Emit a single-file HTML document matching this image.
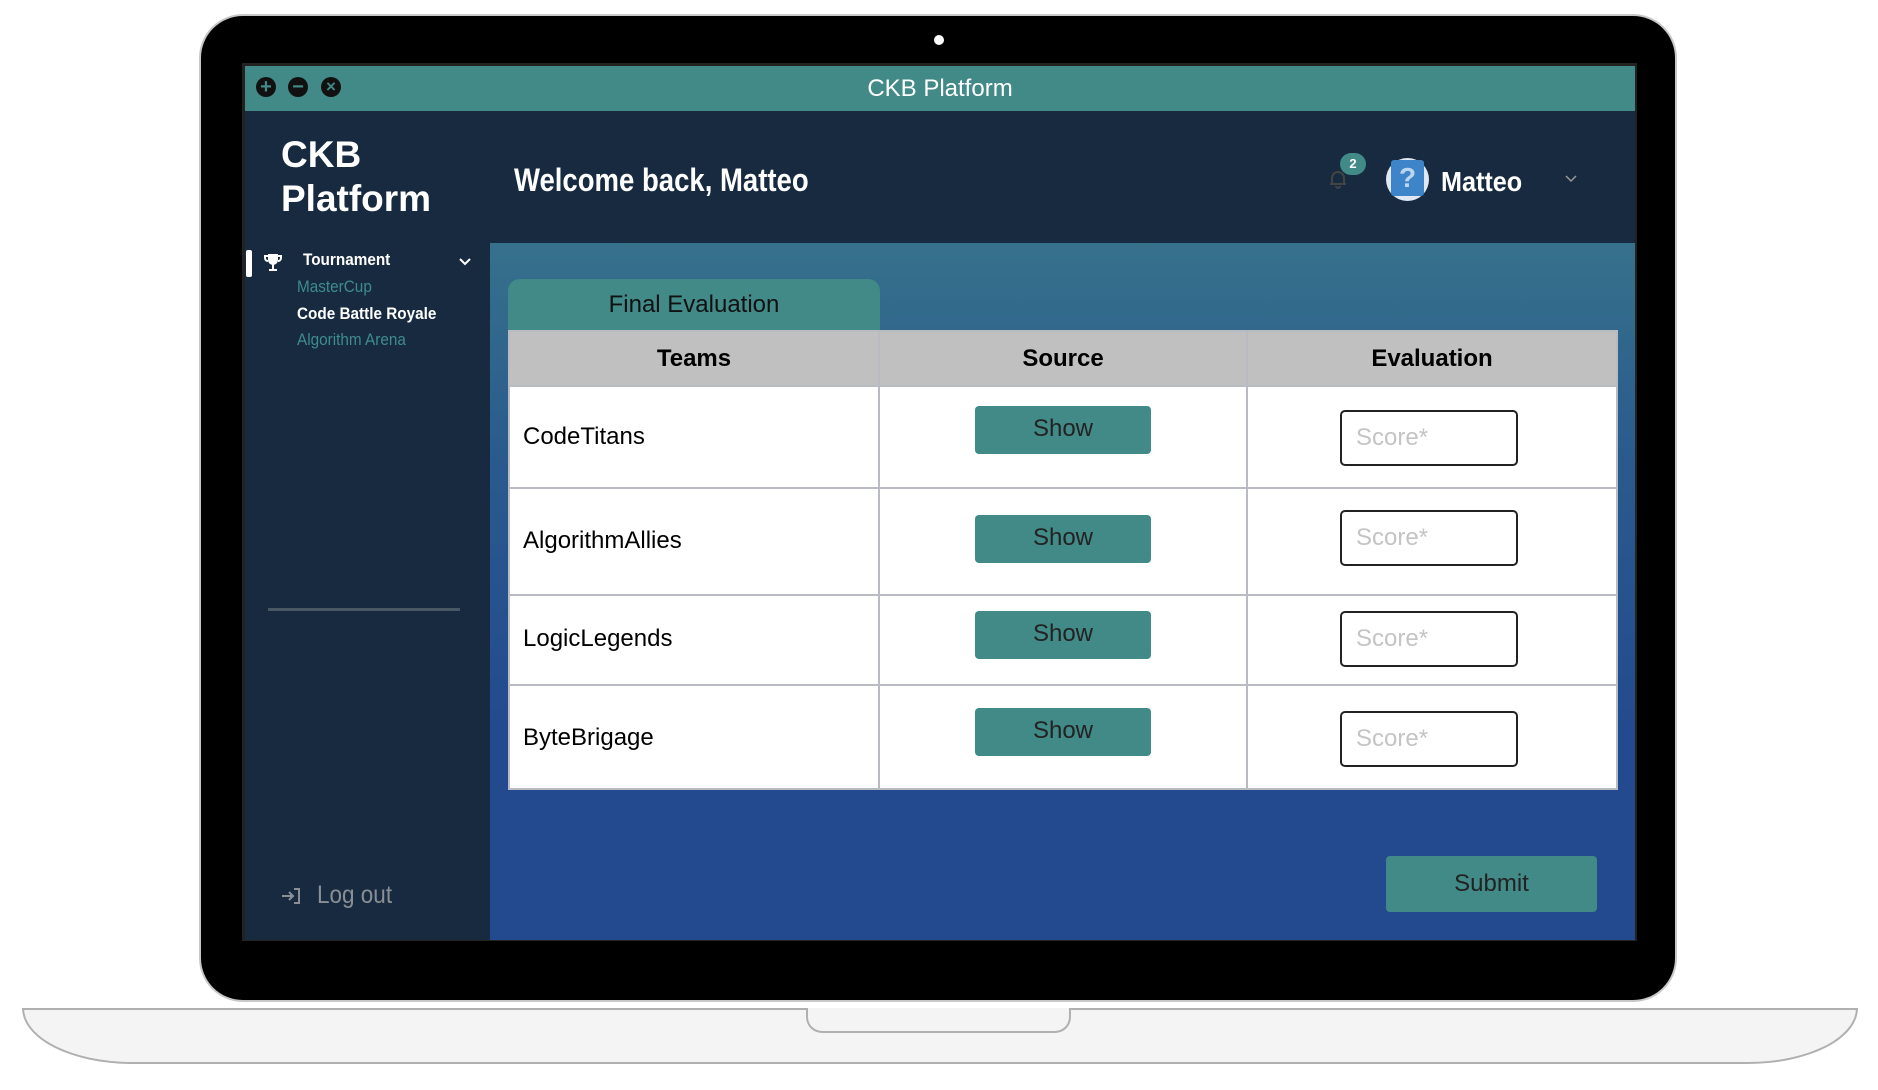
<!DOCTYPE html>
<html><head><meta charset="utf-8"><style>
*{margin:0;padding:0;box-sizing:border-box}
body{width:1878px;height:1090px;background:#fff;position:relative;overflow:hidden;font-family:"Liberation Sans",sans-serif}
.abs{position:absolute}
.bezel{left:199px;top:14px;width:1478px;height:988px;background:#000;border-radius:44px;border:2px solid #c8c8c8}
.base{left:22px;top:1008px;width:1836px;height:56px;background:#f4f4f4;border:2px solid #b0b0b0;border-radius:0 0 110px 110px / 0 0 56px 56px}
.notch{left:806px;top:1008px;width:265px;height:25px;border:2px solid #b0b0b0;border-top:none;border-radius:0 0 16px 16px;background:#f4f4f4}
.screen{left:242px;top:63px;width:1395px;height:878px;background:#222}
.title{left:245px;top:66px;width:1390px;height:45px;background:#418a88;color:#fff;font-size:24px;text-align:center;line-height:45px}
.side{left:245px;top:111px;width:245px;height:829px;background:#172a3f}
.head{left:490px;top:111px;width:1145px;height:132px;background:#172a3f}
.main{left:490px;top:243px;width:1145px;height:697px;background:linear-gradient(#36718c,#2a5b8d 30%,#234a8e 70%,#234a8e)}
.wc{width:20px;height:20px;border-radius:50%;background:#111;top:77px;color:#418a88;font-size:20px;font-weight:bold;line-height:20px;text-align:center}
.cond{display:inline-block;transform:scaleX(.86);transform-origin:left center}
.c2{display:inline-block;transform:scaleX(.9);transform-origin:left center}
table{border-collapse:collapse}
td,th{border:2px solid #b8bcc2}
.btn{position:absolute;width:176px;height:48px;background:#418a88;border-radius:4px;color:#222;font-size:24px;text-align:center;line-height:46px}
.inp{position:absolute;width:178px;height:56px;border:2px solid #222;border-radius:5px;background:#fff;color:#c4c4c4;font-size:24px;line-height:52px;padding-left:14px}
.tn{position:absolute;left:523px;font-size:24px;color:#000}
</style></head><body>
<div class="abs base"></div>
<div class="abs notch"></div>
<div class="abs bezel"></div>
<div class="abs" style="left:934px;top:35px;width:10px;height:10px;border-radius:50%;background:#fff"></div>
<div class="abs screen"></div>
<div class="abs title">CKB Platform</div>
<div class="abs wc" style="left:256px">+</div>
<div class="abs wc" style="left:288px">−</div>
<div class="abs wc" style="left:321px;font-size:17px">×</div>
<div class="abs side"></div>
<div class="abs head"></div>
<div class="abs main"></div>

<div class="abs" style="left:281px;top:133px;color:#fff;font-size:37px;font-weight:bold;line-height:44px">CKB<br>Platform</div>
<div class="abs" style="left:246px;top:250px;width:6px;height:27px;background:#fff;border-radius:2px"></div>
<svg class="abs" style="left:263px;top:252px" width="20" height="22" viewBox="0 0 20 22"><path d="M5 2h10v6a5 5 0 0 1-10 0z" fill="#fff"/><path d="M5 4H2v2a3 3 0 0 0 3 3M15 4h3v2a3 3 0 0 1-3 3" stroke="#fff" stroke-width="2" fill="none"/><rect x="9" y="12" width="2" height="5" fill="#fff"/><rect x="6" y="17" width="8" height="2" fill="#fff"/></svg>
<div class="abs" style="left:303px;top:250px;color:#fff;font-size:17px;font-weight:bold"><span class="c2">Tournament</span></div>
<svg class="abs" style="left:458px;top:257px" width="14" height="10"><path d="M2 2l5 5 5-5" stroke="#fff" stroke-width="2" fill="none"/></svg>
<div class="abs" style="left:297px;top:277px;color:#3f8c8c;font-size:17px"><span class="c2">MasterCup</span></div>
<div class="abs" style="left:297px;top:304px;color:#fff;font-size:17px;font-weight:bold"><span class="c2">Code Battle Royale</span></div>
<div class="abs" style="left:297px;top:330px;color:#3f8c8c;font-size:17px"><span class="c2">Algorithm Arena</span></div>
<div class="abs" style="left:268px;top:608px;width:192px;height:3px;background:#4a5866"></div>
<svg class="abs" style="left:280px;top:886px" width="22" height="20"><path d="M2 10h11M9 6l4 4-4 4M14 3h5v14h-5" stroke="#8a8f96" stroke-width="2" fill="none"/></svg>
<div class="abs" style="left:317px;top:881px;color:#8a8f96;font-size:25px"><span class="c2">Log out</span></div>

<div class="abs" style="left:514px;top:162px;color:#fff;font-size:32px;font-weight:bold"><span class="cond">Welcome back, Matteo</span></div>
<svg class="abs" style="left:1328px;top:168px" width="20" height="22"><path d="M4 16V10a6 6 0 0 1 12 0v6h2H2zM8 18a2 2 0 0 0 4 0" stroke="#444" stroke-width="2" fill="none"/></svg>
<div class="abs" style="left:1340px;top:153px;width:26px;height:22px;border-radius:11px;background:#418a88;color:#fff;font-size:13px;font-weight:bold;text-align:center;line-height:22px">2</div>
<div class="abs" style="left:1386px;top:158px;width:43px;height:43px;border-radius:50%;background:#dfe8f3"></div>
<div class="abs" style="left:1391px;top:160px;width:33px;height:36px;background:#3e84c8;border-radius:3px;color:#bcd6f0;font-size:28px;font-weight:bold;text-align:center;line-height:36px">?</div>
<div class="abs" style="left:1441px;top:166px;color:#fff;font-size:28px;font-weight:bold"><span class="c2">Matteo</span></div>
<svg class="abs" style="left:1565px;top:175px" width="12" height="8"><path d="M1 1l5 5 5-5" stroke="#999" stroke-width="1.5" fill="none"/></svg>

<div class="abs" style="left:508px;top:279px;width:372px;height:52px;background:#418a88;border-radius:12px 12px 0 0;text-align:center;line-height:52px;font-size:24px;color:#111">Final Evaluation</div>
<table class="abs" style="left:508px;top:330px;width:1110px;height:459px">
<tr style="height:55px;background:#c0c0c0"><th style="width:370px;font-size:24px">Teams</th><th style="width:368px;font-size:24px">Source</th><th style="font-size:24px">Evaluation</th></tr>
<tr style="height:102px;background:#fff"><td></td><td></td><td></td></tr>
<tr style="height:107px;background:#fff"><td></td><td></td><td></td></tr>
<tr style="height:90px;background:#fff"><td></td><td></td><td></td></tr>
<tr style="height:104px;background:#fff"><td></td><td></td><td></td></tr>
</table>
<div class="tn" style="top:423px">CodeTitans</div>
<div class="tn" style="top:527px">AlgorithmAllies</div>
<div class="tn" style="top:625px">LogicLegends</div>
<div class="tn" style="top:724px">ByteBrigage</div>
<div class="btn" style="left:975px;top:406px">Show</div>
<div class="btn" style="left:975px;top:515px">Show</div>
<div class="btn" style="left:975px;top:611px">Show</div>
<div class="btn" style="left:975px;top:708px">Show</div>
<div class="inp" style="left:1340px;top:410px">Score*</div>
<div class="inp" style="left:1340px;top:510px">Score*</div>
<div class="inp" style="left:1340px;top:611px">Score*</div>
<div class="inp" style="left:1340px;top:711px">Score*</div>
<div class="btn" style="left:1386px;top:856px;width:211px;height:56px;line-height:56px">Submit</div>
</body></html>
